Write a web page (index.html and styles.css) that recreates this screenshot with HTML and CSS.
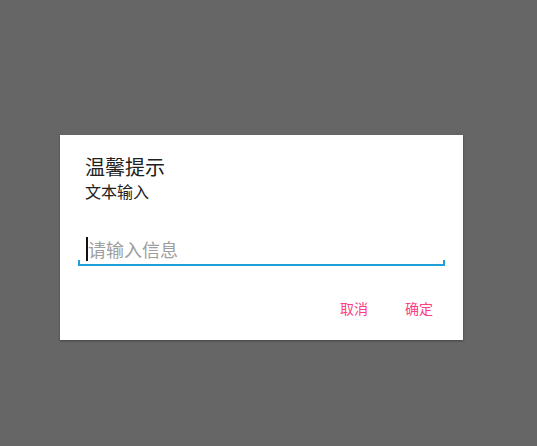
FILE: index.html
```html
<!DOCTYPE html>
<html>
<head>
<meta charset="utf-8">
<link rel="stylesheet" href="styles.css">
</head>
<body>
<div class="dialog">
  <div class="title">温馨提示</div>
  <div class="message">文本输入</div>
  <div class="field">
    <span class="cursor"></span><span class="placeholder">请输入信息</span>
  </div>
  <div class="actions">
    <span class="btn">取消</span>
    <span class="btn">确定</span>
  </div>
</div>
</body>
</html>
```
FILE: styles.css
```css
html, body {
  margin: 0;
  height: 100%;
}
body {
  background: #666666;
  padding: 135px 0 0 60px;
  box-sizing: border-box;
  font-family: "Noto Sans CJK SC", "Noto Sans", sans-serif;
}
.dialog {
  width: 403px;
  height: 205px;
  background: #ffffff;
  box-sizing: border-box;
  padding: 18px 18px 0 18px;
  box-shadow: 0 1px 2px rgba(0,0,0,0.35);
  display: flex;
  flex-direction: column;
}
.title {
  padding-left: 7px;
  font-size: 20px;
  line-height: 28px;
  color: #212121;
}
.message {
  padding-left: 7px;
  font-size: 16px;
  line-height: 20px;
  color: #212121;
}
.field {
  margin-top: 33px;
  height: 30px;
  display: flex;
  align-items: center;
  padding-left: 8px;
  position: relative;
  border-bottom: 2px solid #1fa0d8;
}
.field::before, .field::after {
  content: "";
  position: absolute;
  bottom: 0;
  width: 2px;
  height: 4px;
  background: #1fa0d8;
}
.field::before { left: 0; }
.field::after { right: 0; }
.cursor {
  width: 2px;
  height: 24px;
  background: #111;
}
.placeholder {
  font-size: 18px;
  color: #9e9e9e;
  line-height: 24px;
}
.actions {
  margin-top: 32px;
  display: flex;
  justify-content: flex-end;
  gap: 37px;
  padding-right: 12px;
}
.btn {
  font-size: 14px;
  line-height: 20px;
  color: #ff4081;
}
```
